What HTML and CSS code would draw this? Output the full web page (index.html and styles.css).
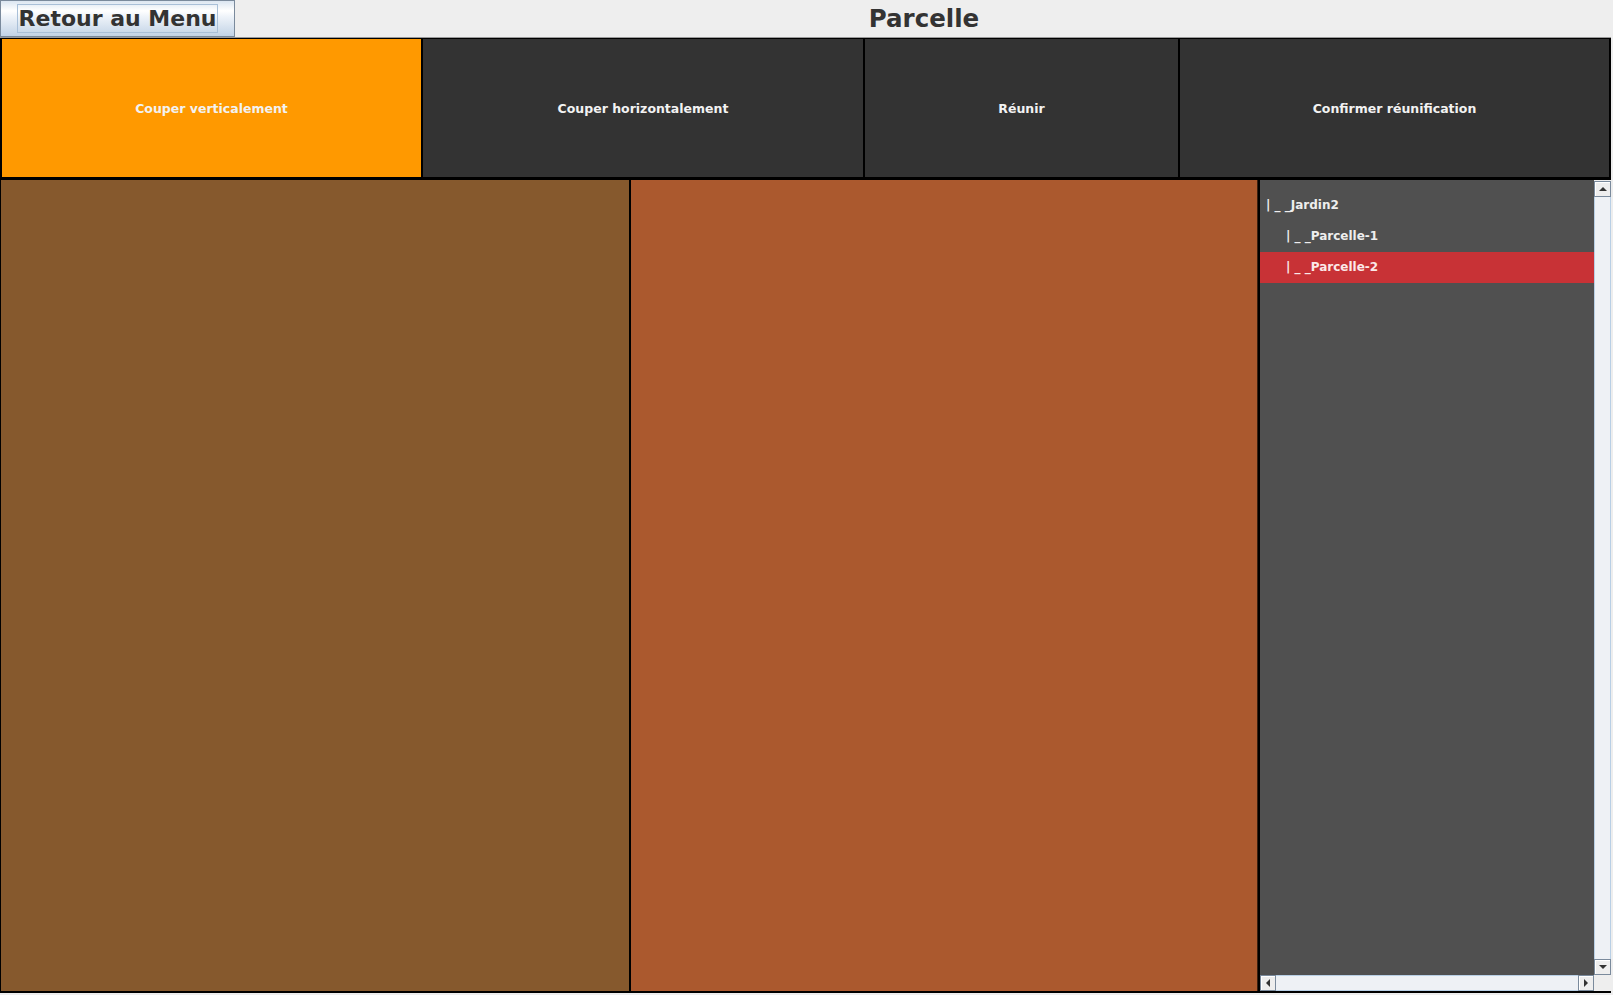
FILE: index.html
```html
<!DOCTYPE html>
<html lang="fr">
<head>
<meta charset="utf-8">
<title>Parcelle</title>
<link rel="stylesheet" href="styles.css">
</head>
<body>
<div class="header">
  <button class="back"><span class="focus">Retour au Menu</span></button>
  <div class="title">Parcelle</div>
</div>
<div class="toolbar">
  <div class="tool active">Couper verticalement</div>
  <div class="tool">Couper horizontalement</div>
  <div class="tool">Réunir</div>
  <div class="tool">Confirmer réunification</div>
</div>
<div class="canvas">
  <div class="plot plot-a"></div>
  <div class="plot plot-b"></div>
  <div class="tree">
    <div class="tree-main">
      <div class="tree-view">
        <div class="node l0">| _ _Jardin2</div>
        <div class="node l1">| _ _Parcelle-1</div>
        <div class="node l1 sel">| _ _Parcelle-2</div>
      </div>
      <div class="vscroll">
        <div class="sb-btn"><span class="arr up"></span></div>
        <div class="sb-track v"></div>
        <div class="sb-btn"><span class="arr down"></span></div>
      </div>
    </div>
    <div class="hrow">
      <div class="hscroll">
        <div class="sb-btn h"><span class="arr left"></span></div>
        <div class="sb-track h"></div>
        <div class="sb-btn h"><span class="arr right"></span></div>
      </div>
      <div class="corner"></div>
    </div>
  </div>
</div>
</body>
</html>
```

FILE: styles.css
```css
html, body {
  margin: 0;
  padding: 0;
  background: #eeeeee;
  font-family: "DejaVu Sans", "Liberation Sans", sans-serif;
  overflow: hidden;
}

.header {
  display: flex;
  height: 37px;
  width: 1613px;
}

.back {
  width: 235px;
  height: 37px;
  margin: 0;
  padding: 0;
  box-sizing: border-box;
  border: 1px solid #7a8a9c;
  background: linear-gradient(to bottom, #dbe6f1 0%, #ffffff 28%, #eef3f9 45%, #c2d3e6 100%);
  display: flex;
  align-items: center;
  justify-content: center;
  font-family: "DejaVu Sans", sans-serif;
  font-weight: bold;
  font-size: 22px;
  color: #333333;
}

.focus {
  display: block;
  border: 1px solid #a9c0d8;
  padding: 0 1px;
  height: 27px;
  line-height: 27px;
}

.title {
  flex: 1;
  text-align: center;
  line-height: 37px;
  font-size: 24.5px;
  font-weight: bold;
  color: #333333;
}

.toolbar {
  display: grid;
  grid-template-columns: 419px 440px 313px 1fr;
  column-gap: 2px;
  width: 1611px;
  box-sizing: border-box;
  background: #000000;
  border-top: 1px solid #9a9a9a;
  padding: 1px 2px 2px 2px;
}

.tool {
  height: 138px;
  background: #333333;
  color: #f2f2f2;
  font-weight: bold;
  font-size: 12.5px;
  display: flex;
  align-items: center;
  justify-content: center;
}

.tool.active {
  background: #ff9900;
}

.canvas {
  display: flex;
  width: 1611px;
  height: 814px;
  box-sizing: border-box;
  background: #000000;
  padding: 1px 0 2px 1px;
}

.plot {
  height: 100%;
}

.plot-a {
  width: 628px;
  background: #86592d;
  margin-right: 2px;
}

.plot-b {
  width: 626px;
  background: #ab592e;
  border-right: 1px solid #3a2010;
  margin-right: 2px;
}

.tree {
  flex: 1;
  display: flex;
  flex-direction: column;
  background: #505050;
}

.tree-main {
  flex: 1;
  display: flex;
}

.tree-view {
  flex: 1;
  padding-top: 10px;
}

.node {
  height: 31px;
  line-height: 31px;
  font-size: 12px;
  font-weight: bold;
  color: #eeeeee;
  white-space: pre;
}

.node.l0 { padding-left: 6px; }
.node.l1 { padding-left: 26px; }

.node.sel {
  background: #c83236;
  color: #fbe8e8;
}

.vscroll {
  width: 17px;
  display: flex;
  flex-direction: column;
  background: #eeeeee;
  padding-top: 1px;
}

.sb-btn {
  height: 16px;
  box-sizing: border-box;
  border: 1px solid #7a8a9c;
  background: #eeeeee;
  box-shadow: inset 1px 1px 0 #ffffff;
  display: flex;
  align-items: center;
  justify-content: center;
}

.sb-btn.h {
  width: 16px;
  height: 16px;
}

.sb-track.v {
  flex: 1;
  box-sizing: border-box;
  border-left: 1px solid #b8cfe5;
  border-right: 1px solid #b8cfe5;
  background: #eef1f5;
}

.hrow {
  display: flex;
  height: 16px;
}

.hscroll {
  flex: 1;
  display: flex;
  background: #eeeeee;
}

.sb-track.h {
  flex: 1;
  box-sizing: border-box;
  border-top: 1px solid #b8cfe5;
  border-bottom: 1px solid #b8cfe5;
  background: #eef1f5;
}

.corner {
  width: 17px;
  background: #eeeeee;
}

.arr {
  width: 0;
  height: 0;
  display: block;
}

.arr.up {
  border-left: 4px solid transparent;
  border-right: 4px solid transparent;
  border-bottom: 4px solid #333333;
}

.arr.down {
  border-left: 4px solid transparent;
  border-right: 4px solid transparent;
  border-top: 4px solid #333333;
}

.arr.left {
  border-top: 4px solid transparent;
  border-bottom: 4px solid transparent;
  border-right: 4px solid #333333;
}

.arr.right {
  border-top: 4px solid transparent;
  border-bottom: 4px solid transparent;
  border-left: 4px solid #333333;
}
```
